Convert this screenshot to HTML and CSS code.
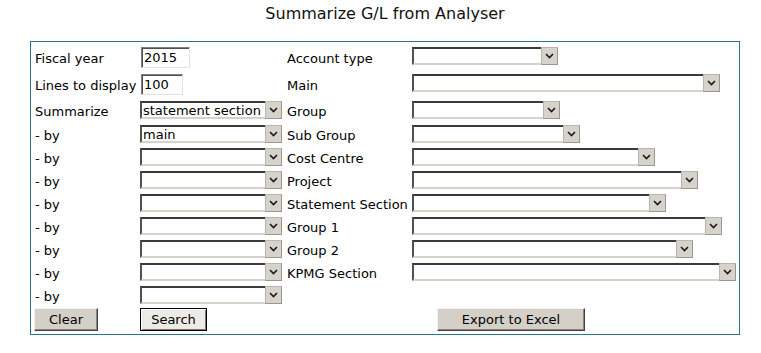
FILE: index.html
```html
<!DOCTYPE html>
<html>
<head>
<meta charset="utf-8">
<title>Summarize G/L from Analyser</title>
<link rel="stylesheet" href="styles.css">
</head>
<body>
<div class="page">
  <h1 class="title">Summarize G/L from Analyser</h1>
  <form class="panel">
    <div class="grid">
      <label class="lbl lbl-input">Fiscal year</label>
      <div class="cell"><input class="input input-year" type="text" value="2015"></div>
      <label class="lbl lbl-input">Account type</label>
      <div class="cell"><div class="select w146"><span class="field"></span><span class="arrow"><svg width="9" height="6" viewBox="0 0 9 6"><path d="M1 1 L4.5 4.5 L8 1" fill="none" stroke="#1a1a1a" stroke-width="1.6"/></svg></span></div></div>

      <label class="lbl lbl-input">Lines to display</label>
      <div class="cell"><input class="input input-lines" type="text" value="100"></div>
      <label class="lbl lbl-input">Main</label>
      <div class="cell"><div class="select w308"><span class="field"></span><span class="arrow"><svg width="9" height="6" viewBox="0 0 9 6"><path d="M1 1 L4.5 4.5 L8 1" fill="none" stroke="#1a1a1a" stroke-width="1.6"/></svg></span></div></div>

      <label class="lbl">Summarize</label>
      <div class="cell"><div class="select w142"><span class="field">statement section</span><span class="arrow"><svg width="9" height="6" viewBox="0 0 9 6"><path d="M1 1 L4.5 4.5 L8 1" fill="none" stroke="#1a1a1a" stroke-width="1.6"/></svg></span></div></div>
      <label class="lbl">Group</label>
      <div class="cell"><div class="select w148"><span class="field"></span><span class="arrow"><svg width="9" height="6" viewBox="0 0 9 6"><path d="M1 1 L4.5 4.5 L8 1" fill="none" stroke="#1a1a1a" stroke-width="1.6"/></svg></span></div></div>

      <label class="lbl">- by</label>
      <div class="cell"><div class="select w142"><span class="field">main</span><span class="arrow"><svg width="9" height="6" viewBox="0 0 9 6"><path d="M1 1 L4.5 4.5 L8 1" fill="none" stroke="#1a1a1a" stroke-width="1.6"/></svg></span></div></div>
      <label class="lbl">Sub Group</label>
      <div class="cell"><div class="select w168"><span class="field"></span><span class="arrow"><svg width="9" height="6" viewBox="0 0 9 6"><path d="M1 1 L4.5 4.5 L8 1" fill="none" stroke="#1a1a1a" stroke-width="1.6"/></svg></span></div></div>

      <label class="lbl">- by</label>
      <div class="cell"><div class="select w142"><span class="field"></span><span class="arrow"><svg width="9" height="6" viewBox="0 0 9 6"><path d="M1 1 L4.5 4.5 L8 1" fill="none" stroke="#1a1a1a" stroke-width="1.6"/></svg></span></div></div>
      <label class="lbl">Cost Centre</label>
      <div class="cell"><div class="select w243"><span class="field"></span><span class="arrow"><svg width="9" height="6" viewBox="0 0 9 6"><path d="M1 1 L4.5 4.5 L8 1" fill="none" stroke="#1a1a1a" stroke-width="1.6"/></svg></span></div></div>

      <label class="lbl">- by</label>
      <div class="cell"><div class="select w142"><span class="field"></span><span class="arrow"><svg width="9" height="6" viewBox="0 0 9 6"><path d="M1 1 L4.5 4.5 L8 1" fill="none" stroke="#1a1a1a" stroke-width="1.6"/></svg></span></div></div>
      <label class="lbl">Project</label>
      <div class="cell"><div class="select w286"><span class="field"></span><span class="arrow"><svg width="9" height="6" viewBox="0 0 9 6"><path d="M1 1 L4.5 4.5 L8 1" fill="none" stroke="#1a1a1a" stroke-width="1.6"/></svg></span></div></div>

      <label class="lbl">- by</label>
      <div class="cell"><div class="select w142"><span class="field"></span><span class="arrow"><svg width="9" height="6" viewBox="0 0 9 6"><path d="M1 1 L4.5 4.5 L8 1" fill="none" stroke="#1a1a1a" stroke-width="1.6"/></svg></span></div></div>
      <label class="lbl">Statement Section</label>
      <div class="cell"><div class="select w254"><span class="field"></span><span class="arrow"><svg width="9" height="6" viewBox="0 0 9 6"><path d="M1 1 L4.5 4.5 L8 1" fill="none" stroke="#1a1a1a" stroke-width="1.6"/></svg></span></div></div>

      <label class="lbl">- by</label>
      <div class="cell"><div class="select w142"><span class="field"></span><span class="arrow"><svg width="9" height="6" viewBox="0 0 9 6"><path d="M1 1 L4.5 4.5 L8 1" fill="none" stroke="#1a1a1a" stroke-width="1.6"/></svg></span></div></div>
      <label class="lbl">Group 1</label>
      <div class="cell"><div class="select w310"><span class="field"></span><span class="arrow"><svg width="9" height="6" viewBox="0 0 9 6"><path d="M1 1 L4.5 4.5 L8 1" fill="none" stroke="#1a1a1a" stroke-width="1.6"/></svg></span></div></div>

      <label class="lbl">- by</label>
      <div class="cell"><div class="select w142"><span class="field"></span><span class="arrow"><svg width="9" height="6" viewBox="0 0 9 6"><path d="M1 1 L4.5 4.5 L8 1" fill="none" stroke="#1a1a1a" stroke-width="1.6"/></svg></span></div></div>
      <label class="lbl">Group 2</label>
      <div class="cell"><div class="select w281"><span class="field"></span><span class="arrow"><svg width="9" height="6" viewBox="0 0 9 6"><path d="M1 1 L4.5 4.5 L8 1" fill="none" stroke="#1a1a1a" stroke-width="1.6"/></svg></span></div></div>

      <label class="lbl">- by</label>
      <div class="cell"><div class="select w142"><span class="field"></span><span class="arrow"><svg width="9" height="6" viewBox="0 0 9 6"><path d="M1 1 L4.5 4.5 L8 1" fill="none" stroke="#1a1a1a" stroke-width="1.6"/></svg></span></div></div>
      <label class="lbl">KPMG Section</label>
      <div class="cell"><div class="select w324"><span class="field"></span><span class="arrow"><svg width="9" height="6" viewBox="0 0 9 6"><path d="M1 1 L4.5 4.5 L8 1" fill="none" stroke="#1a1a1a" stroke-width="1.6"/></svg></span></div></div>

      <label class="lbl">- by</label>
      <div class="cell"><div class="select w142"><span class="field"></span><span class="arrow"><svg width="9" height="6" viewBox="0 0 9 6"><path d="M1 1 L4.5 4.5 L8 1" fill="none" stroke="#1a1a1a" stroke-width="1.6"/></svg></span></div></div>
      <div class="cell"></div>
      <div class="cell"></div>

      <div class="cell"><button type="button" class="btn btn-clear">Clear</button></div>
      <div class="cell"><button type="button" class="btn btn-default btn-search">Search</button></div>
      <div class="cell"></div>
      <div class="cell"><button type="button" class="btn btn-export">Export to Excel</button></div>
    </div>
  </form>
</div>
</body>
</html>
```

FILE: styles.css
```css
* { box-sizing: border-box; }

body {
  margin: 0;
  background: #fff;
  color: #000;
  font-family: "DejaVu Sans", Verdana, sans-serif;
  font-size: 13px;
}

.page {
  width: 710px;
  margin-left: 30px;
}

.title {
  margin: 0;
  height: 41px;
  padding-top: 4px;
  font-size: 16px;
  font-weight: normal;
  line-height: 20px;
  text-align: center;
  color: #111;
}

.panel {
  height: 294px;
  margin: 0;
  padding: 5px 4px 2px;
  border: 1px solid #2f7391;
}

.grid {
  display: grid;
  grid-template-columns: 105px 147px 125px 1fr;
  grid-template-rows: 27px 27px 24px repeat(7, 23px) 22px 23px;
}

.cell {
  display: flex;
  align-items: flex-start;
}

.lbl {
  white-space: nowrap;
  line-height: 21px;
}

.lbl-input {
  line-height: 23px;
}

.input {
  height: 21px;
  margin: 0 0 0 1px;
  padding: 0 2px;
  border: 1px solid;
  border-color: #7f7f7f #e4e2dc #e4e2dc #7f7f7f;
  box-shadow: inset 1px 1px 0 #505050;
  font-family: "DejaVu Sans", Verdana, sans-serif;
  font-size: 13px;
  color: #000;
  background: #fff;
  outline: none;
}

.input-year { width: 49px; }
.input-lines { width: 42px; }

.select {
  display: flex;
  height: 18px;
  background: #fff;
}

.field {
  flex: 1;
  min-width: 0;
  height: 18px;
  padding-left: 1px;
  border-style: solid;
  border-width: 2px 0 2px 2px;
  border-color: #3a3a3a transparent #d6d3cc #505050;
  line-height: 16px;
  white-space: nowrap;
  overflow: hidden;
}

.arrow {
  width: 17px;
  height: 18px;
  display: flex;
  align-items: center;
  justify-content: center;
  background: #d6d3cc;
  border: 1px solid;
  border-color: #b9b6af #9a978f #9a978f #b9b6af;
}

.w142 { width: 142px; }
.w146 { width: 146px; }
.w148 { width: 148px; }
.w168 { width: 168px; }
.w243 { width: 243px; }
.w254 { width: 254px; }
.w281 { width: 281px; }
.w286 { width: 286px; }
.w308 { width: 308px; }
.w310 { width: 310px; }
.w324 { width: 324px; }

.btn {
  height: 23px;
  padding: 0;
  font-family: "DejaVu Sans", Verdana, sans-serif;
  font-size: 13px;
  color: #000;
  background: #d4d0c8;
  border: 1px solid;
  border-color: #f4f3ef #404040 #404040 #f4f3ef;
  box-shadow: inset -1px -1px 0 #8a8780;
  border-radius: 0;
}

.btn-clear { width: 64px; margin-left: -1px; }

.btn-default {
  border: 1px solid #000;
  background: #ecebe6;
  box-shadow: inset 1px 1px 0 #fff, inset -1px -1px 0 #7a7872;
}

.btn-search { width: 67px; }

.btn-export { width: 148px; margin-left: 25px; }
```
